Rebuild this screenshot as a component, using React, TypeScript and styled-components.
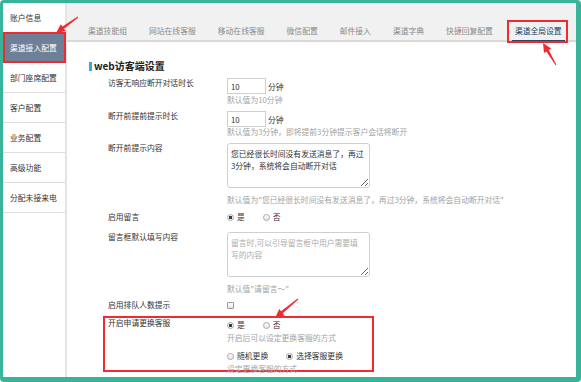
import React from 'react'
import styled, { createGlobalStyle } from 'styled-components'

const GlobalStyle = createGlobalStyle`
  body {
    margin: 0;
    background: #fff;
    font-family: "Noto Sans CJK SC", "Noto Sans", sans-serif;
  }
`

const red = '#ee2b30'

const Page = styled.div`
  position: relative;
  width: 581px;
  height: 382px;
  overflow: hidden;
`

const Frame = styled.div`
  box-sizing: border-box;
  width: 581px;
  height: 382px;
  border: solid #37b49a;
  border-width: 3px 5px 5px 3px;
  border-radius: 4px;
  display: flex;
  background: #fff;
  font-size: 7.8px;
  color: #333;
  overflow: hidden;
`

const Sidebar = styled.nav`
  width: 62px;
  flex-shrink: 0;
  border-right: 2px solid #e4e4e4;
  background: #fff;
`

const SideItem = styled.div<{ $active?: boolean }>`
  box-sizing: border-box;
  height: 30px;
  line-height: 29px;
  white-space: nowrap;
  padding-left: ${p => (p.$active ? '5px' : '7px')};
  border-bottom: 1px solid #dedede;
  ${p =>
    p.$active &&
    `
    position: relative;
    margin: -1px -1px 0 0;
    height: 31px;
    line-height: 27px;
    background: #6d8098;
    color: #fff;
    border: 2px solid ${red};
  `}
`

const Main = styled.main`
  flex: 1;
  min-width: 0;
  overflow: hidden;
`

const TabBar = styled.div`
  height: 37px;
  background: #f1f1f1;
  border-bottom: 2px solid #d9d9d9;
  display: flex;
  align-items: flex-end;
  padding-left: 10px;
  white-space: nowrap;
`

const Tab = styled.div<{ $active?: boolean }>`
  position: relative;
  flex-shrink: 0;
  margin: 0 8px;
  padding: 0 3px;
  height: 19px;
  line-height: 19px;
  color: ${p => (p.$active ? '#223f5e' : '#8a8a8a')};
  ${p =>
    p.$active &&
    `
    margin-bottom: -2px;
    border-bottom: 2px solid #2b4460;
    &::after {
      content: '';
      position: absolute;
      top: -1px;
      bottom: -3px;
      left: -5px;
      right: -3px;
      border: 2px solid ${red};
    }
  `}
`

const Content = styled.section`
  padding: 19px 0 0 22px;
`

const Heading = styled.h3`
  margin: 0;
  display: flex;
  align-items: center;
  font-size: 10px;
  line-height: 10px;
  font-weight: bold;
  color: #222;
  &::before {
    content: '';
    width: 3px;
    height: 9px;
    margin-right: 2px;
    background: #3aa7e6;
  }
`

const Form = styled.div`
  margin-left: 14px;
`

const Row = styled.div<{ $top: number; $boxed?: boolean; $height?: number }>`
  box-sizing: border-box;
  display: grid;
  grid-template-columns: 119px 1fr;
  width: 271px;
  margin-top: ${p => p.$top}px;
  padding-left: 3px;
  border: 2px solid ${p => (p.$boxed ? red : 'transparent')};
  height: ${p => (p.$height ? `${p.$height}px` : 'auto')};
`

const Label = styled.div`
  line-height: 10px;
  white-space: nowrap;
  color: #333;
`

const Control = styled.div`
  min-width: 0;
`

const InputLine = styled.div`
  display: flex;
  align-items: center;
  height: 16px;
  gap: 2px;
`

const NumInput = styled.input`
  box-sizing: border-box;
  width: 39px;
  height: 16px;
  border: 1px solid #cfcfcf;
  padding: 0 3px;
  font: inherit;
  color: #333;
  outline: none;
`

const Hint = styled.div<{ $top?: number }>`
  margin-top: ${p => p.$top ?? 0}px;
  line-height: 10px;
  color: #a3a3a3;
  white-space: nowrap;
`

const Area = styled.textarea`
  display: block;
  box-sizing: border-box;
  width: 143px;
  height: 45px;
  border: 1px solid #cfcfcf;
  border-radius: 3px;
  padding: 4px 3px;
  font: inherit;
  line-height: 11.5px;
  color: #333;
  overflow: hidden;
  outline: none;
  &::placeholder {
    color: #ababab;
  }
`

const Radios = styled.div<{ $top?: number }>`
  display: flex;
  gap: 18px;
  margin-top: ${p => p.$top ?? 0}px;
  line-height: 10px;
`

const RadioItem = styled.label`
  display: flex;
  align-items: center;
  gap: 3px;
  white-space: nowrap;
  color: #333;
`

const Dot = styled.span<{ $on?: boolean }>`
  box-sizing: border-box;
  width: 7px;
  height: 7px;
  border-radius: 50%;
  border: 1px solid #a9a9a9;
  background: ${p =>
    p.$on
      ? 'radial-gradient(circle, #3a3a3a 0 1.4px, #f3f3f3 1.9px)'
      : 'linear-gradient(#fdfdfd, #e6e6e6)'};
`

const CheckLine = styled.div`
  height: 10px;
  display: flex;
  align-items: center;
`

const Check = styled.span`
  box-sizing: border-box;
  width: 7px;
  height: 7px;
  border: 1px solid #9a9a9a;
  border-radius: 1px;
  background: linear-gradient(#fff, #e6e6e6);
`

const Overlay = styled.svg`
  position: absolute;
  left: 0;
  top: 0;
  pointer-events: none;
`

const arrow = (tx: number, ty: number, hx: number, hy: number): string => {
  const dx = hx - tx
  const dy = hy - ty
  const len = Math.hypot(dx, dy)
  const ux = dx / len
  const uy = dy / len
  const nx = -uy
  const ny = ux
  const bx = hx - ux * 9
  const by = hy - uy * 9
  const pts: [number, number][] = [
    [tx + nx * 0.5, ty + ny * 0.5],
    [bx + nx * 1.4, by + ny * 1.4],
    [bx + nx * 4.2, by + ny * 4.2],
    [hx, hy],
    [bx - nx * 4.2, by - ny * 4.2],
    [bx - nx * 1.4, by - ny * 1.4],
    [tx - nx * 0.5, ty - ny * 0.5],
  ]
  return pts.map(p => p.map(v => v.toFixed(1)).join(',')).join(' ')
}

const sideItems = ['账户信息', '渠道接入配置', '部门座席配置', '客户配置', '业务配置', '高级功能', '分配未接来电']
const tabs = ['渠道技能组', '网站在线客服', '移动在线客服', '微信配置', '邮件接入', '渠道字典', '快捷回复配置', '渠道全局设置']

const Radio = ({ on, text }: { on?: boolean; text: string }) => (
  <RadioItem>
    <Dot $on={on} />
    {text}
  </RadioItem>
)

const App = () => {
  return (
    <Page>
      <GlobalStyle />
      <Frame>
        <Sidebar>
          {sideItems.map((s, i) => (
            <SideItem key={s} $active={i === 1}>{s}</SideItem>
          ))}
        </Sidebar>
        <Main>
          <TabBar>
            {tabs.map((t, i) => (
              <Tab key={t} $active={i === tabs.length - 1}>{t}</Tab>
            ))}
          </TabBar>
          <Content>
            <Heading>web访客端设置</Heading>
            <Form>
              <Row $top={5}>
                <Label>访客无响应断开对话时长</Label>
                <Control>
                  <InputLine>
                    <NumInput defaultValue="10" />
                    分钟
                  </InputLine>
                  <Hint $top={1}>默认值为10分钟</Hint>
                </Control>
              </Row>
              <Row $top={2}>
                <Label>断开前提前提示时长</Label>
                <Control>
                  <InputLine>
                    <NumInput defaultValue="10" />
                    分钟
                  </InputLine>
                  <Hint>默认值为3分钟，即将提前3分钟提示客户会话将断开</Hint>
                </Control>
              </Row>
              <Row $top={2}>
                <Label>断开前提示内容</Label>
                <Control>
                  <Area defaultValue="您已经很长时间没有发送消息了，再过3分钟，系统将会自动断开对话" />
                  <Hint $top={7}>默认值为"您已经很长时间没有发送消息了，再过3分钟，系统将会自动断开对话"</Hint>
                </Control>
              </Row>
              <Row $top={3}>
                <Label>启用留言</Label>
                <Control>
                  <Radios>
                    <Radio on text="是" />
                    <Radio text="否" />
                  </Radios>
                </Control>
              </Row>
              <Row $top={6}>
                <Label>留言框默认填写内容</Label>
                <Control>
                  <Area placeholder={'留言时,可以引导留言框中用户需要填\n写的内容'} />
                  <Hint $top={7}>默认值"请留言～"</Hint>
                </Control>
              </Row>
              <Row $top={2}>
                <Label>启用排队人数提示</Label>
                <Control>
                  <CheckLine>
                    <Check />
                  </CheckLine>
                </Control>
              </Row>
              <Row $top={4} $boxed $height={56}>
                <Label>开启申请更换客服</Label>
                <Control>
                  <Radios $top={2}>
                    <Radio on text="是" />
                    <Radio text="否" />
                  </Radios>
                  <Hint $top={3}>开启后可以设定更换客服的方式</Hint>
                  <Radios $top={8}>
                    <Radio text="随机更换" />
                    <Radio on text="选择客服更换" />
                  </Radios>
                  <Hint $top={3}>设定更换客服的方式</Hint>
                </Control>
              </Row>
            </Form>
          </Content>
        </Main>
      </Frame>
      <Overlay width={581} height={382} viewBox="0 0 581 382">
        <polygon points={arrow(78, 17, 56, 33)} fill={red} />
        <polygon points={arrow(556, 65, 543, 43)} fill={red} />
        <polygon points={arrow(298, 299, 275, 318)} fill={red} />
      </Overlay>
    </Page>
  )
}

export default App
